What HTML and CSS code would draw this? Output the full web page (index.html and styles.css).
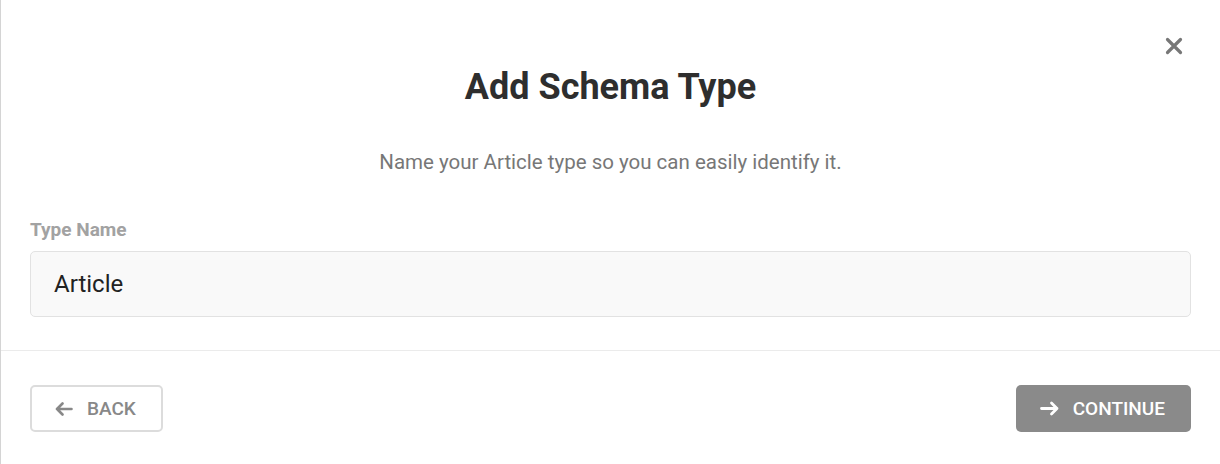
FILE: index.html
```html
<!DOCTYPE html>
<html lang="en">
<head>
<meta charset="utf-8">
<title>Add Schema Type</title>
<link rel="stylesheet" href="styles.css">
</head>
<body>
<div class="modal">
  <button class="close" aria-label="Close">
    <svg width="18" height="18" viewBox="0 0 18 18"><path d="M2.5 2.5L15.5 15.5M15.5 2.5L2.5 15.5" stroke="#777" stroke-width="3.2" stroke-linecap="round"/></svg>
  </button>
  <div class="body">
    <h1 class="title">Add Schema Type</h1>
    <p class="subtitle">Name your Article type so you can easily identify it.</p>
    <label class="label" for="typeName">Type Name</label>
    <div class="input" id="typeName">Article</div>
  </div>
  <div class="footer">
    <button class="btn btn-back">
      <svg width="18" height="14" viewBox="0 0 18 14"><path d="M16.5 7H2M7.5 1.5L2 7l5.5 5.5" fill="none" stroke="#888" stroke-width="2.6" stroke-linecap="round" stroke-linejoin="round"/></svg>
      <span>BACK</span>
    </button>
    <button class="btn btn-continue">
      <svg width="19" height="15" viewBox="0 0 19 15"><path d="M1.5 7.5H17M11.5 2l5.5 5.5-5.5 5.5" fill="none" stroke="#fff" stroke-width="2.8" stroke-linecap="round" stroke-linejoin="round"/></svg>
      <span>CONTINUE</span>
    </button>
  </div>
</div>
</body>
</html>
```
FILE: styles.css
```css
html, body {
  margin: 0;
  padding: 0;
  background: #fff;
}
body {
  font-family: Roboto, "Liberation Sans", sans-serif;
}
.modal {
  position: relative;
  height: 464px;
  box-sizing: border-box;
  border-left: 1px solid #d4d4d4;
  background: #fff;
}
.close {
  position: absolute;
  top: 37px;
  right: 37px;
  width: 18px;
  height: 18px;
  padding: 0;
  border: 0;
  background: none;
  display: flex;
}
.body {
  padding: 65px 29px 0 29px;
  display: flex;
  flex-direction: column;
}
.title {
  margin: 0;
  text-align: center;
  font-size: 36px;
  line-height: 44px;
  font-weight: 700;
  color: #2e2e2e;
}
.subtitle {
  margin: 39px 0 0 0;
  text-align: center;
  font-size: 20.5px;
  line-height: 28px;
  color: #777;
}
.label {
  margin-top: 42px;
  font-size: 19px;
  line-height: 24px;
  font-weight: 700;
  color: #a2a2a2;
}
.input {
  margin-top: 9px;
  height: 66px;
  box-sizing: border-box;
  border: 1px solid #e2e2e2;
  border-radius: 5px;
  background: #f9f9f9;
  padding: 0 23px;
  display: flex;
  align-items: center;
  font-size: 24px;
  color: #222;
}
.footer {
  margin-top: 33px;
  border-top: 1px solid #ebebeb;
  padding: 34px 29px 0 29px;
  display: flex;
  justify-content: space-between;
}
.btn {
  height: 47px;
  box-sizing: border-box;
  border-radius: 5px;
  display: flex;
  align-items: center;
  font-family: Roboto, "Liberation Sans", sans-serif;
  font-size: 19px;
  font-weight: 500;
  cursor: pointer;
}
.btn-back {
  border: 2px solid #dcdcdc;
  background: #fff;
  color: #888;
  padding: 0 25px 0 23px;
  gap: 14px;
}
.btn-continue {
  border: 0;
  background: #8a8a8a;
  color: #fff;
  padding: 0 26px 0 24px;
  gap: 14px;
}
```
